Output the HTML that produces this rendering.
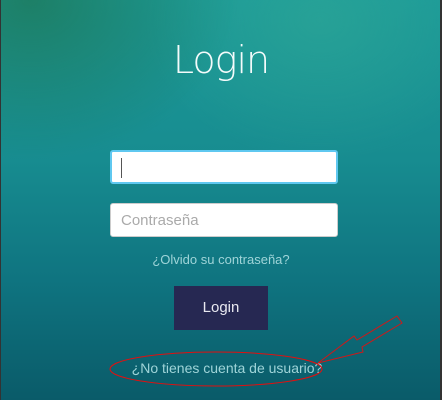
<!DOCTYPE html>
<html><head><meta charset="utf-8"><style>
html,body{margin:0;padding:0}
body{width:442px;height:400px;position:relative;overflow:hidden;font-family:"Liberation Sans",sans-serif;
background:
radial-gradient(ellipse 260px 200px at 30px 0px, rgba(30,110,70,0.6), rgba(30,110,70,0) 80%),
radial-gradient(ellipse 250px 200px at 320px 20px, rgba(50,170,150,0.5), rgba(50,170,150,0) 70%),
linear-gradient(180deg,#1c9a98 0%,#178c90 40%,#0f7480 70%,#0a5b69 100%);}
.bl{position:absolute;left:0;top:0;width:1px;height:400px;background:#333}
.br{position:absolute;right:0;top:0;width:2px;height:400px;background:#333}
h1{position:absolute;left:0;width:442px;top:38px;margin:0;text-align:center;font-size:38px;color:#f4fbfb;font-family:"DejaVu Sans","Liberation Sans",sans-serif;font-weight:200;letter-spacing:-1px}
.in{position:absolute;left:110px;width:228px;height:34px;background:#fff;border-radius:3px;box-sizing:border-box}
.in1{top:150px;border:2px solid #5fc8f0}
.in2{top:203px;border:1px solid #ccc}
.cur{position:absolute;left:9px;top:6px;width:1px;height:20px;background:#555}
.ph{position:absolute;left:10px;top:8px;font-size:15px;color:#aaa}
.fg{position:absolute;left:0;width:442px;top:252px;text-align:center;font-size:13px;color:#9fd4d8}
.btn{position:absolute;left:174px;top:286px;width:94px;height:44px;background:#262852;color:#e8e8f0;font-size:15px;text-align:center;line-height:44px}
.nt{position:absolute;left:0;width:454px;top:360px;text-align:center;font-size:14px;color:#9fd4d8}
svg{position:absolute;left:0;top:0}
</style></head><body>
<div class="bl"></div><div class="br"></div>
<h1>Login</h1>
<div class="in in1"><div class="cur"></div></div>
<div class="in in2"><div class="ph">Contraseña</div></div>
<div class="fg">¿Olvido su contraseña?</div>
<div class="btn">Login</div>
<div class="nt">¿No tienes cuenta de usuario?</div>
<svg width="442" height="400"><ellipse cx="216" cy="369" rx="106" ry="17" fill="none" stroke="#e01010" stroke-width="1"/>
<path d="M318 363 L354 336 L357 340 L397 316 L402 323 L362 347 L363 352 Z" fill="none" stroke="#d01818" stroke-width="1"/></svg>
</body></html>
